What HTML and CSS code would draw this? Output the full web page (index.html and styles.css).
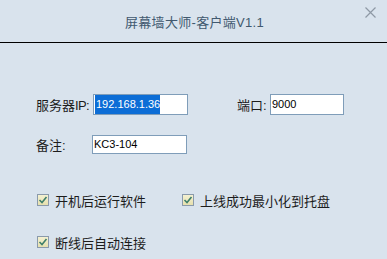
FILE: index.html
```html
<!DOCTYPE html>
<html lang="zh-CN">
<head>
  <meta charset="UTF-8" />
  <meta name="viewport" content="width=device-width, initial-scale=1" />
  <title>屏幕墙大师-客户端V1.1</title>
  <link rel="stylesheet" href="styles.css">
</head>
<body>

  <div class="window">
    <div class="titlebar">
      <span class="title">屏幕墙大师-客户端V1.1</span>
      <span class="close">
        <svg width="11" height="11" viewBox="0 0 11 11">
          <path d="M0.5 0.5 L10.5 10.5 M10.5 0.5 L0.5 10.5" stroke="#8e99a5" stroke-width="1.2" fill="none"/>
        </svg>
      </span>
    </div>

    <div class="form">
      <div class="row">
        <label class="label">服务器<span class="latin">IP:</span></label>
        <div class="input ip"><span class="selected">192.168.1.36</span></div>
        <label class="label port-label">端口:</label>
        <div class="input port">9000</div>
      </div>
      <div class="row remark">
        <label class="label">备注:</label>
        <div class="input ip">KC3-104</div>
      </div>

      <div class="checks">
        <div class="check">
          <span class="box">
            <svg width="10" height="10" viewBox="0 0 10 10"><path d="M1.5 5 L4 7.5 L8.5 2" stroke="#3f7f6a" stroke-width="1.6" fill="none"/></svg>
          </span>
          开机后运行软件
        </div>
        <div class="check">
          <span class="box">
            <svg width="10" height="10" viewBox="0 0 10 10"><path d="M1.5 5 L4 7.5 L8.5 2" stroke="#3f7f6a" stroke-width="1.6" fill="none"/></svg>
          </span>
          上线成功最小化到托盘
        </div>
        <div class="check">
          <span class="box">
            <svg width="10" height="10" viewBox="0 0 10 10"><path d="M1.5 5 L4 7.5 L8.5 2" stroke="#3f7f6a" stroke-width="1.6" fill="none"/></svg>
          </span>
          断线后自动连接
        </div>
      </div>
    </div>
  </div>

</body>
</html>
```

FILE: styles.css
```css
* {
  margin: 0;
  padding: 0;
  box-sizing: border-box;
}

html, body {
  width: 100%;
  height: 100%;
  overflow: hidden;
  background: #d9e3ed;
  font-family: "Liberation Sans", "Noto Sans CJK SC", sans-serif;
  color: #1c1c1c;
}

.window {
  width: 387px;
  height: 259px;
}

.titlebar {
  position: relative;
  height: 43px;
  border-bottom: 1px solid #000;
  display: flex;
  align-items: center;
  justify-content: center;
}

.title {
  font-size: 13px;
  color: #41596f;
  letter-spacing: 0.3px;
  margin-left: 2px;
}

.close {
  position: absolute;
  top: 4px;
  right: 11px;
  width: 11px;
  height: 11px;
}

.form {
  padding: 51px 0 0 36px;
}

.row {
  display: flex;
  align-items: center;
  height: 21px;
}

.remark {
  margin-top: 20px;
  height: 19px;
}

.label {
  font-size: 13px;
  width: 57px;
}

.latin {
  letter-spacing: -0.6px;
}

.port-label {
  width: 33px;
  margin-left: 49px;
}

.input {
  height: 100%;
  background: #fff;
  border: 1px solid #7f9db9;
  font-size: 11px;
  line-height: 17px;
  padding-left: 1px;
  color: #000;
  display: flex;
  align-items: center;
}

.remark .input {
  margin-left: -1px;
}

.input.ip {
  width: 95px;
}

.input.port {
  width: 74px;
}

.selected {
  background: #0c6dd6;
  color: #fff;
  padding: 1px 0 1px 1px;
}

.checks {
  margin-top: 38px;
  margin-left: 1px;
  display: grid;
  grid-template-columns: 145px auto;
  row-gap: 26px;
}

.check {
  display: flex;
  align-items: center;
  height: 16px;
  font-size: 13px;
}

.box {
  width: 12px;
  height: 12px;
  border: 1px solid #8a9aab;
  background: linear-gradient(#f4f1d2, #e6e0ae);
  display: flex;
  align-items: center;
  justify-content: center;
  margin-right: 6px;
}
```
